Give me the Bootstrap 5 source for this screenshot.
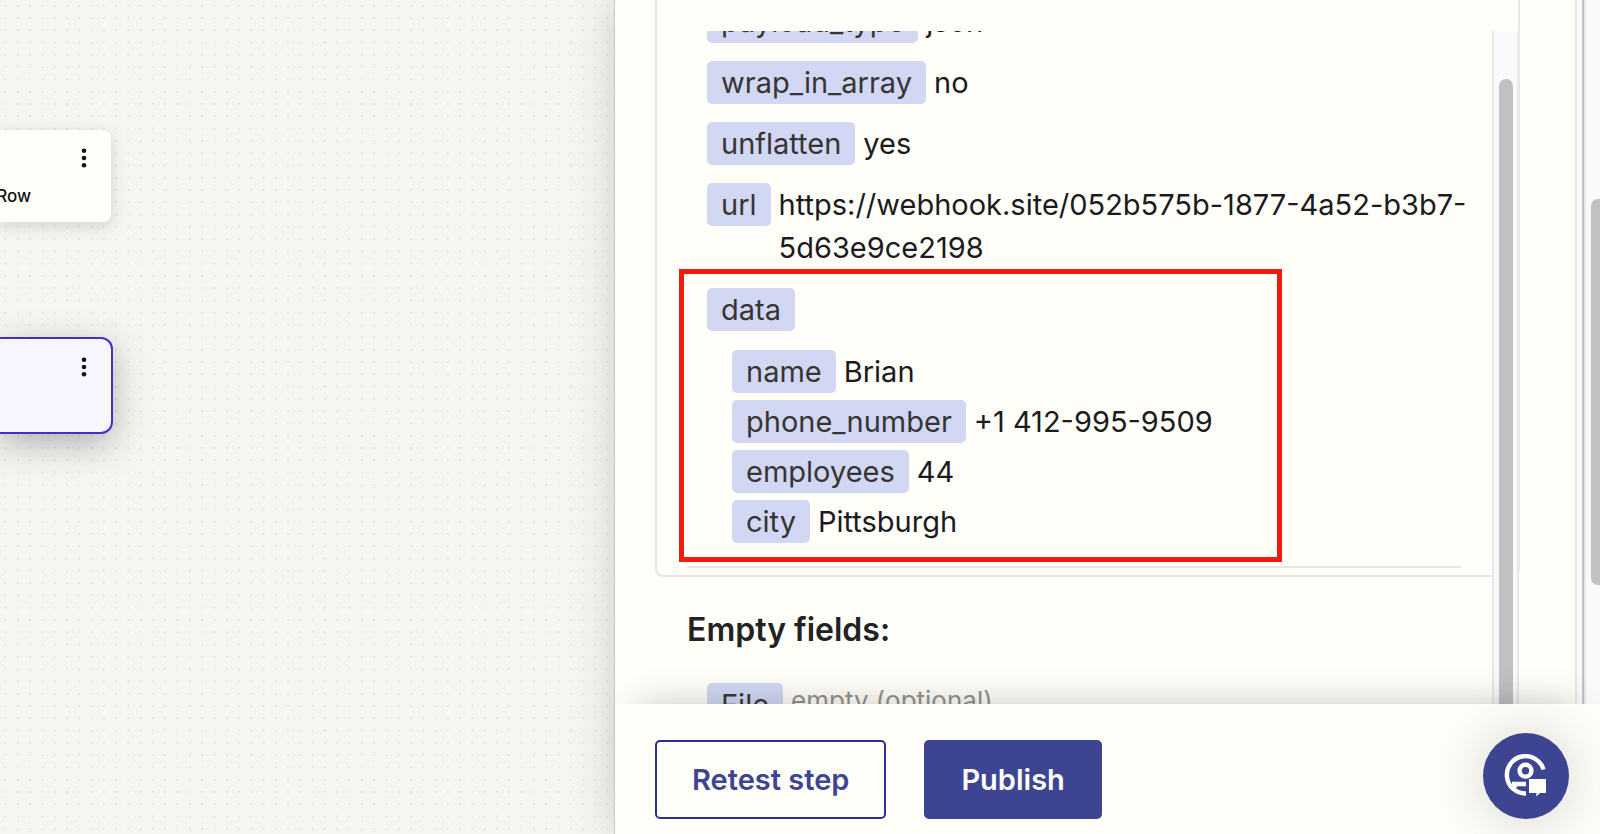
<!DOCTYPE html>
<html lang="en">
<head>
<meta charset="utf-8">
<meta name="viewport" content="width=device-width, initial-scale=1">
<title>Workflow editor</title>
<link href="https://cdn.jsdelivr.net/npm/bootstrap@5.3.0/dist/css/bootstrap.min.css" rel="stylesheet">
<style>
  body { font-family: Inter, "Liberation Sans", sans-serif; color: #1b1b1d; background: #fffef9; }
  .canvas-pane {
    flex: 0 0 614px; padding-top: 130px;
    background: #f6f5f2 url("data:image/svg+xml,%3Csvg xmlns='http://www.w3.org/2000/svg' width='86' height='86' viewBox='0 0 7 7'%3E%3Cdefs%3E%3Cpattern id='d' width='1' height='1' patternUnits='userSpaceOnUse'%3E%3Ccircle cx='.45' cy='.46' r='.08' fill='%23dedddb'/%3E%3C/pattern%3E%3C/defs%3E%3Crect width='7' height='7' fill='url(%23d)'/%3E%3C/svg%3E");
  }
  .step-node { width: 111px; height: 92px; background: #fffef9; border-radius: 0 8px 8px 0; box-shadow: 0 4px 16px rgba(45,46,46,.18); }
  .step-node.is-active { width: 113px; height: 97px; margin-top: 115px; background: #f7f5fd; border: 2px solid #4331c2; border-left: 0; border-radius: 0 12px 12px 0; box-shadow: 0 10px 34px rgba(45,46,46,.34); }
  .step-menu { width: 22px; height: 28px; margin: 14px 16px 0 0; }
  .step-name { padding-right: 80px; margin-top: 12px; font-size: 17px; line-height: 24px; font-weight: 500; color: #111; }
  .side-panel { min-width: 0; background: #fffef9; border-left: 1px solid #c9c8c5; box-shadow: 0 0 40px rgba(45,46,46,.2); z-index: 1; }
  .panel-body { min-height: 0; }
  .panel-main { min-width: 0; padding: 0 55px 0 40px; }
  .result-box { height: 577px; padding-top: 31px; border: 2px solid #e8e7e5; border-top: 0; border-radius: 0 0 8px 8px; }
  .result-scroll { height: 700px; margin-right: -1px; }
  .result-list { margin-top: -31px; padding: 0 31px 0 30px; font-size: 29px; line-height: 43px; }
  .field-rows { padding-left: 20px; margin-right: -12px; gap: 18px; }
  .sub-rows { padding-left: 25px; margin-top: 19px; gap: 7px; }
  .field-row { gap: 8px; }
  .field-group { margin-top: 1px; }
  .field-key { padding: 0 14px; border-radius: 5px; background: #d2d7f4; color: #363533; white-space: nowrap; }
  .field-none { color: #92918c; font-size: 26px; line-height: 36px; }
  .mark-frame { top: -19px; left: -28px; width: 603px; height: 293px; border: 5px solid #f01b0e; }
  .rule-line { height: 2px; margin-top: 23px; background: #e8e7e5; }
  .list-title { margin: 40px 0 32px; font-size: 32px; line-height: 43px; font-weight: 600; color: #222; }
  .inner-bar { flex: 0 0 27px; padding: 48px 4px 0 5px; background: #fafafa; border: solid #e8e8e8; border-width: 0 2px; }
  .inner-thumb { height: 700px; border-radius: 7px; background: #c1c1c1; }
  .outer-edge { flex: 0 0 9px; border-right: 2px solid #c1c1c1; border-left: 2px solid #e8e8e8; background: #fafafa; }
  .outer-bar { flex: 0 0 16px; padding: 199px 0 0 5px; background: #fafafa; border-left: 2px solid #e8e8e8; }
  .outer-thumb { height: 386px; margin-right: -6px; border-radius: 7px; background: #c1c1c1; }
  .panel-foot { position: relative; padding: 36px 31px 15px 40px; gap: 38px; background: #fffef9; box-shadow: 0 -24px 36px -24px rgba(45,46,46,.26); }
  .btn-step { height: 79px; padding: 0 35px; font-size: 29px; line-height: 43px; font-weight: 600; border: 2px solid #2b3191; border-radius: 5px; color: #3d4592; background: #fffef9; }
  .btn-step.is-main { color: #fffef9; background: #3d4592; border-color: #3d4592; }
  .btn-help { width: 86px; height: 86px; margin-top: -7px; background: #3d4592; box-shadow: 0 2px 60px rgba(45,46,46,.22); }
</style>
</head>
<body>
<div class="d-flex vh-100 overflow-hidden">
  <main class="canvas-pane overflow-hidden">
    <section class="step-node d-flex flex-column align-items-end">
      <button class="step-menu btn p-0 border-0 d-flex justify-content-center align-items-center" aria-label="Step menu">
        <svg width="6" height="20" viewBox="0 0 6 20" fill="#161616"><circle cx="3" cy="2.700" r="2.300"/><circle cx="3" cy="10" r="2.300"/><circle cx="3" cy="17.200" r="2.300"/></svg>
      </button>
      <div class="step-name">Row</div>
    </section>
    <section class="step-node is-active d-flex flex-column align-items-end">
      <button class="step-menu btn p-0 border-0 d-flex justify-content-center align-items-center" aria-label="Step menu">
        <svg width="6" height="20" viewBox="0 0 6 20" fill="#161616"><circle cx="3" cy="2.700" r="2.300"/><circle cx="3" cy="10" r="2.300"/><circle cx="3" cy="17.200" r="2.300"/></svg>
      </button>
    </section>
  </main>

  <aside class="side-panel flex-grow-1 d-flex flex-column">
    <div class="panel-body d-flex flex-grow-1 overflow-hidden">
      <div class="panel-main flex-grow-1">
        <div class="result-box">
          <div class="result-scroll d-flex overflow-hidden">
            <div class="result-list flex-grow-1">
              <div class="field-rows d-flex flex-column">
                <div class="field-row d-flex"><span class="field-key">payload_type</span><span>json</span></div>
                <div class="field-row d-flex"><span class="field-key">wrap_in_array</span><span>no</span></div>
                <div class="field-row d-flex"><span class="field-key">unflatten</span><span>yes</span></div>
                <div class="field-row d-flex align-items-start"><span class="field-key">url</span><span>https://webhook.site/052b575b-1877-4a52-b3b7-5d63e9ce2198</span></div>
                <div class="field-group position-relative">
                  <div class="field-row d-flex"><span class="field-key">data</span></div>
                  <div class="sub-rows d-flex flex-column">
                    <div class="field-row d-flex"><span class="field-key">name</span><span>Brian</span></div>
                    <div class="field-row d-flex"><span class="field-key">phone_number</span><span>+1 412-995-9509</span></div>
                    <div class="field-row d-flex"><span class="field-key">employees</span><span>44</span></div>
                    <div class="field-row d-flex"><span class="field-key">city</span><span>Pittsburgh</span></div>
                  </div>
                  <div class="mark-frame position-absolute"></div>
                </div>
              </div>
              <div class="rule-line"></div>
              <h2 class="list-title">Empty fields:</h2>
              <div class="field-rows d-flex flex-column">
                <div class="field-row d-flex align-items-start"><span class="field-key">File</span><span class="field-none">empty (optional)</span></div>
              </div>
            </div>
            <div class="inner-bar"><div class="inner-thumb"></div></div>
          </div>
        </div>
      </div>
      <div class="outer-edge"></div>
      <div class="outer-bar"><div class="outer-thumb"></div></div>
    </div>
    <footer class="panel-foot d-flex align-items-start">
      <button class="btn btn-step">Retest step</button>
      <button class="btn btn-step is-main">Publish</button>
      <button class="btn btn-help rounded-circle border-0 p-0 ms-auto d-flex align-items-center justify-content-center" aria-label="Help">
        <svg width="44" height="44" viewBox="0 0 44 44" fill="none" stroke="#fffef9" stroke-width="4.400">
          <path d="M39.500 15.500A18.700 18.700 0 1 0 22 39.500M8 30H22M10 29L11 34"/>
          <circle cx="21.500" cy="16.700" r="5.900"/>
          <path d="M25 25H42v14H36l-3.600 3.500V39H25z" fill="#fffef9" stroke="none"/>
        </svg>
      </button>
    </footer>
  </aside>
</div>
<script src="https://cdn.jsdelivr.net/npm/bootstrap@5.3.0/dist/js/bootstrap.bundle.min.js"></script>
</body>
</html>
